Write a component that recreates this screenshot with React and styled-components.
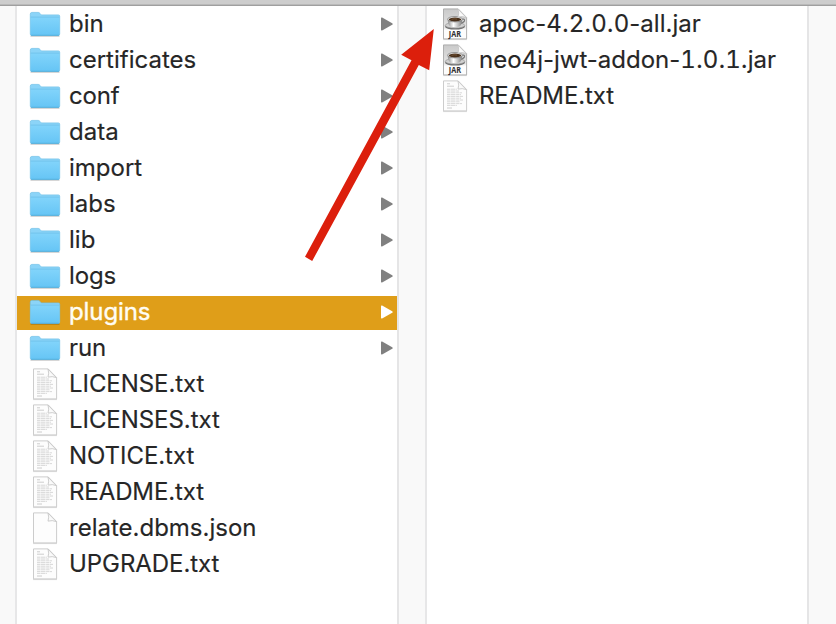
import React from "react";
import styled, { createGlobalStyle } from "styled-components";

const GlobalStyle = createGlobalStyle`
  html, body { margin: 0; padding: 0; background: #fff; overflow: hidden; }
  * { box-sizing: border-box; }
`;

const Window = styled.main`
  position: relative;
  display: flex;
  flex-direction: column;
  width: 836px;
  height: 624px;
  overflow: hidden;
  background: #fff;
  font-family: Inter, "Liberation Sans", sans-serif;
`;

const TopBar = styled.header`
  flex: none;
  height: 6px;
  background: linear-gradient(#cdcdcd 0 4px, #b9b9b9 4px 5px, #9f9f9f 5px 6px);
`;

const Browser = styled.div`
  flex: 1;
  display: flex;
`;

const Gutter = styled.div`
  flex: none;
  width: ${(p) => p.$width}px;
  background: #f9f9f9;
  border-right: ${(p) => (p.$last ? "0" : "2px solid #e7e7e8")};
`;

const Column = styled.ul`
  flex: none;
  display: flex;
  flex-direction: column;
  gap: 2px;
  width: 382px;
  margin: 0;
  padding: 2px 0 0;
  list-style: none;
  border-right: 2px solid #e5e5e6;
`;

const Row = styled.li`
  display: flex;
  align-items: center;
  height: 34px;
  padding: 0 4px 0 12px;
  background: ${(p) => (p.$selected ? "#df9e19" : "transparent")};
  color: ${(p) => (p.$selected ? "#fffdf3" : "#262626")};
`;

const IconSlot = styled.span`
  display: flex;
  justify-content: center;
  width: 32px;
  height: 34px;
  margin-right: 8px;
`;

const Name = styled.span`
  flex: 1;
  font-size: 24px;
  line-height: 32px;
  height: 34px;
  white-space: nowrap;
  letter-spacing: ${(p) => p.$spacing || 0}px;
  -webkit-text-stroke: ${(p) => (p.$selected ? "0.4px" : "0.15px")} currentColor;
`;

const Digit = styled.span`
  font-variant-numeric: tabular-nums;
`;

const Chevron = styled.svg`
  flex: none;
  margin-bottom: 2px;
  fill: ${(p) => (p.$selected ? "#fff" : "#808080")};
`;

const Arrow = styled.svg`
  position: absolute;
  left: 300px;
  top: 24px;
`;

const Gradients = styled.svg`
  position: absolute;
`;

function FolderIcon() {
  return (
    <svg width="32" height="34" viewBox="0 0 32 34">
      <path d="M1.5 28.2H30.5" stroke="#000" strokeOpacity=".18" strokeWidth="1.4" />
      <path d="M1.3 6.2Q1.3 4.4 2.8 4.4H9.2Q10.2 4.4 11 5.4L12.3 6.9H29.4Q30.7 6.9 30.7 8.2V26Q30.7 27.5 29.3 27.5H2.7Q1.3 27.5 1.3 26Z" fill="#8bd4f8" stroke="#6fc0e6" strokeWidth=".7" />
      <path d="M1.7 9.2H30.3V26Q30.3 27.1 29.2 27.1H2.8Q1.7 27.1 1.7 26Z" fill="url(#folderFace)" />
      <path d="M1.7 9.1H30.3" stroke="#68bde6" strokeWidth=".7" />
      <path d="M2 27.3H30" stroke="#4ba8d7" strokeWidth=".8" />
    </svg>
  );
}

function Page({ children, jar }) {
  return (
    <svg width="32" height="34" viewBox="0 0 32 34">
      <path d="M4 31.6H28" stroke="#000" strokeOpacity=".14" strokeWidth="1" />
      <path d="M4.5 .9H19.2L27.6 9.5V30.9H4.5Z" fill={jar ? "url(#jarPage)" : "#fdfdfd"} stroke={jar ? "#a8a8a8" : "#c6c6c6"} strokeWidth=".9" />
      {children}
      <path d="M19 1.1Q20.4 5.2 19 9.1Q23.5 7.9 27.3 9.6Z" fill="#fafafa" stroke="#c2c2c2" strokeWidth=".8" />
    </svg>
  );
}

function TextIcon() {
  return (
    <Page>
      <g stroke="#c4c4c4" strokeWidth=".65" fill="none">
        <path d="M8 3.8h3M8 6.2h7" stroke="#b4b4b4" />
        <path strokeDasharray="3 .5 5 .6" d="M8 9.2h10M8 11h12M8 12.8h15M8 14.6h14M8 16.4h16M8 18.2h14M8 20h16M8 21.8h13M8 23.6h15M8 25.4h10" />
        <path d="M8 28h5" stroke="#b4b4b4" />
      </g>
    </Page>
  );
}

function JarIcon() {
  return (
    <Page jar>
      <ellipse cx="16" cy="18.6" rx="10" ry="3" fill="#707070" />
      <ellipse cx="16" cy="17.4" rx="9.8" ry="2.8" fill="#d0d0d0" stroke="#808080" strokeWidth=".5" />
      <path d="M22.4 11.5Q26.2 10.4 25.4 13Q24.6 15 20.8 15.3" fill="none" stroke="#777" strokeWidth="1.2" />
      <path d="M8.6 11Q8.8 18.7 13.4 19H18.6Q23.2 18.4 23.4 11Z" fill="url(#cupSide)" />
      <ellipse cx="16" cy="11.2" rx="7.4" ry="2.7" fill="#ececec" stroke="#666" strokeWidth=".6" />
      <ellipse cx="16" cy="11.5" rx="6.2" ry="1.9" fill="#49301b" />
      <path d="M12.5 11.4Q15 10.4 18 11.1" fill="none" stroke="#8f6c48" strokeWidth=".6" />
      <text x="16" y="29.2" textAnchor="middle" fontFamily="Open Sans, sans-serif" fontSize="8" fontWeight="700" fill="#303030" textLength="12.3" lengthAdjust="spacingAndGlyphs">JAR</text>
    </Page>
  );
}

function PlainIcon() {
  return <Page />;
}

const ICONS = { folder: FolderIcon, text: TextIcon, jar: JarIcon, plain: PlainIcon };

function Entry({ name, type, selected, spacing }) {
  const Icon = ICONS[type];
  const parts = name.split(/(\d)/);
  return (
    <Row $selected={selected}>
      <IconSlot><Icon /></IconSlot>
      <Name $selected={selected} $spacing={spacing}>
        {parts.map((part, i) => (i % 2 ? <Digit key={i}>{part}</Digit> : part))}
      </Name>
      {type === "folder" && (
        <Chevron $selected={selected} width="12" height="14" viewBox="0 0 12 14">
          <path d="M0 1.2Q0 .2 1.1 .6L11.2 6.2Q12.3 7 11.2 7.8L1.1 13.4Q0 13.8 0 12.8Z" />
        </Chevron>
      )}
    </Row>
  );
}

const ROOT = [
  { name: "bin", type: "folder" },
  { name: "certificates", type: "folder" },
  { name: "conf", type: "folder", spacing: -0.15 },
  { name: "data", type: "folder" },
  { name: "import", type: "folder" },
  { name: "labs", type: "folder" },
  { name: "lib", type: "folder" },
  { name: "logs", type: "folder", spacing: -0.1 },
  { name: "plugins", type: "folder", selected: true, spacing: -0.1 },
  { name: "run", type: "folder", spacing: -0.15 },
  { name: "LICENSE.txt", type: "text", spacing: -0.06 },
  { name: "LICENSES.txt", type: "text", spacing: -0.06 },
  { name: "NOTICE.txt", type: "text", spacing: -0.06 },
  { name: "README.txt", type: "text", spacing: -0.1 },
  { name: "relate.dbms.json", type: "plain" },
  { name: "UPGRADE.txt", type: "text", spacing: -0.06 },
];

const PLUGINS = [
  { name: "apoc-4.2.0.0-all.jar", type: "jar" },
  { name: "neo4j-jwt-addon-1.0.1.jar", type: "jar" },
  { name: "README.txt", type: "text", spacing: -0.1 },
];

export default function App() {
  return (
    <Window>
      <GlobalStyle />
      <Gradients width="0" height="0" aria-hidden="true">
        <defs>
          <linearGradient id="folderFace" x1="0" y1="0" x2="0" y2="1">
            <stop offset="0" stopColor="#82d4fb" />
            <stop offset="1" stopColor="#66c5f5" />
          </linearGradient>
          <linearGradient id="jarPage" x1="0" y1="0" x2="0" y2="1">
            <stop offset="0" stopColor="#c9c9c9" />
            <stop offset=".6" stopColor="#e3e3e3" />
            <stop offset=".72" stopColor="#fdfdfd" />
          </linearGradient>
          <linearGradient id="cupSide">
            <stop offset="0" stopColor="#8c8c8c" />
            <stop offset=".4" stopColor="#fff" />
            <stop offset="1" stopColor="#808080" />
          </linearGradient>
        </defs>
      </Gradients>
      <TopBar />
      <Browser>
        <Gutter $width={17} />
        <Column>{ROOT.map((e) => <Entry key={e.name} {...e} />)}</Column>
        <Gutter $width={28} />
        <Column>{PLUGINS.map((e) => <Entry key={e.name} {...e} />)}</Column>
        <Gutter $width={27} $last />
      </Browser>
      <Arrow width="140" height="244" viewBox="300 24 140 244">
        <path d="M433.8 29L401.2 54.8L411.5 60.3L305 256.8L312.2 261L418.8 65L429.2 70.2Z" fill="#dc1f0c" />
      </Arrow>
    </Window>
  );
}
